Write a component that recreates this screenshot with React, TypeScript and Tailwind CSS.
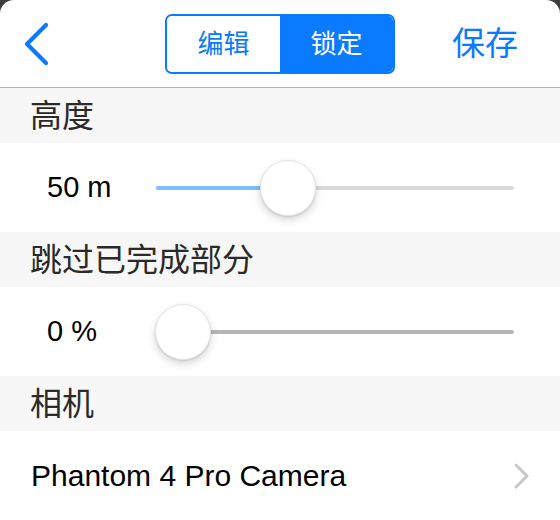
const font = { fontFamily: '"Liberation Sans", "Noto Sans CJK SC", sans-serif' };

function SectionHeader({ title }: { title: string }) {
  return (
    <div className="h-[55px] bg-[#f7f7f7] flex items-center pl-[30px]">
      <span className="text-[32px] leading-none text-[#2a2a2a]">{title}</span>
    </div>
  );
}

function SliderRow({
  label,
  percent,
  fillColor,
  trackColor,
}: {
  label: string;
  percent: number;
  fillColor: string;
  trackColor: string;
}) {
  return (
    <div className="h-[89px] bg-white flex items-center">
      <span className="w-[156px] pl-[47px] text-[29px] leading-none text-black">
        {label}
      </span>
      <div className="relative w-[358px] h-[4px]">
        <div
          className="absolute inset-0 rounded-full"
          style={{ background: trackColor }}
        />
        <div
          className="absolute left-0 top-0 h-full rounded-full"
          style={{ width: `${percent}%`, background: fillColor }}
        />
        <div
          className="absolute top-1/2 w-[56px] h-[56px] -translate-x-1/2 -translate-y-1/2 rounded-full bg-white border border-[#e6e6e6] shadow-[0_4px_8px_rgba(0,0,0,0.16),0_1px_2px_rgba(0,0,0,0.12)]"
          style={{ left: `calc(${percent}% + ${percent === 0 ? 27 : 0}px)` }}
        />
      </div>
    </div>
  );
}

export default function App() {
  return (
    <div className="w-[560px] h-[520px] bg-[#3c3c3c] overflow-hidden" style={font}>
      <div className="h-full bg-white rounded-t-[14px] overflow-hidden flex flex-col">
        {/* Nav bar */}
        <div className="h-[88px] flex items-center relative border-b border-[#b2b2b2] shrink-0">
          <svg width="30" height="46" viewBox="0 0 30 46" className="ml-[22px]">
            <polyline
              points="24,4 5,23 24,42"
              fill="none"
              stroke="#0a7aff"
              strokeWidth="4.2"
              strokeLinecap="round"
              strokeLinejoin="round"
            />
          </svg>
          <div className="absolute left-[165px] top-[14px] w-[230px] h-[60px] flex border-2 border-[#0a7aff] rounded-[7px] overflow-hidden">
            <button className="flex-1 bg-white text-[#0a7aff] text-[26px] leading-none">
              编辑
            </button>
            <button className="flex-1 bg-[#0a7aff] text-white text-[26px] leading-none">
              锁定
            </button>
          </div>
          <span className="ml-auto mr-[42px] text-[33px] leading-none text-[#0a7aff]">
            保存
          </span>
        </div>

        <SectionHeader title="高度" />
        <SliderRow
          label="50 m"
          percent={37}
          fillColor="#7fbcff"
          trackColor="#dadada"
        />

        <SectionHeader title="跳过已完成部分" />
        <SliderRow
          label="0 %"
          percent={0}
          fillColor="#b6b6b6"
          trackColor="#b6b6b6"
        />

        <SectionHeader title="相机" />
        <div className="flex-1 bg-white flex items-center pl-[31px] pr-[28px]">
          <span className="text-[30px] leading-none text-black">
            Phantom 4 Pro Camera
          </span>
          <svg width="20" height="28" viewBox="0 0 20 28" className="ml-auto">
            <polyline
              points="4,3 15,14 4,25"
              fill="none"
              stroke="#c7c7cc"
              strokeWidth="3"
              strokeLinecap="round"
              strokeLinejoin="round"
            />
          </svg>
        </div>
      </div>
    </div>
  );
}
